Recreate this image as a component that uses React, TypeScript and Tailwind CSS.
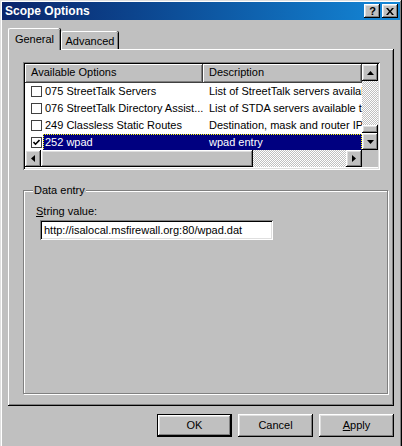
import React from "react";

const raised =
  "shadow-[inset_-1px_-1px_#000,inset_1px_1px_#fff,inset_-2px_-2px_#808080,inset_2px_2px_#dfdfdf]";
const headerBtn =
  "shadow-[inset_-1px_-1px_#404040,inset_1px_1px_#fff,inset_-2px_-2px_#808080]";
const sunken =
  "shadow-[inset_1px_1px_#808080,inset_-1px_-1px_#fff,inset_2px_2px_#000,inset_-2px_-2px_#dfdfdf]";

function Arrow({ dir }: { dir: "up" | "down" | "left" | "right" }) {
  if (dir === "up")
    return (
      <svg width="7" height="4" viewBox="0 0 7 4">
        <polygon points="3.5,0 7,4 0,4" fill="#000" />
      </svg>
    );
  if (dir === "down")
    return (
      <svg width="7" height="4" viewBox="0 0 7 4">
        <polygon points="0,0 7,0 3.5,4" fill="#000" />
      </svg>
    );
  if (dir === "left")
    return (
      <svg width="4" height="7" viewBox="0 0 4 7">
        <polygon points="4,0 4,7 0,3.5" fill="#000" />
      </svg>
    );
  return (
    <svg width="4" height="7" viewBox="0 0 4 7">
      <polygon points="0,0 4,3.5 0,7" fill="#000" />
    </svg>
  );
}

const rows = [
  { name: "075 StreetTalk Servers", desc: "List of StreetTalk servers available", checked: false, sel: false },
  { name: "076 StreetTalk Directory Assist...", desc: "List of STDA servers available to the client", checked: false, sel: false },
  { name: "249 Classless Static Routes", desc: "Destination, mask and router IP addresses", checked: false, sel: false },
  { name: "252 wpad", desc: "wpad entry", checked: true, sel: true },
];

export default function App() {
  return (
    <div className="w-[402px] h-[446px] overflow-hidden bg-[#c0c0c0] font-['Liberation_Sans',Arial,sans-serif] text-[11px] text-black">
      <div className="w-[402px] h-[452px] p-[2px] flex flex-col bg-[#c0c0c0] shadow-[inset_-1px_-1px_#000,inset_1px_1px_#dfdfdf,inset_-2px_-2px_#808080,inset_2px_2px_#fff]">
        {/* Title bar */}
        <div className="h-[18px] flex items-center pl-[3px] pr-[2px] bg-linear-to-r from-[#0a246a] to-[#1488d8]">
          <span className="flex-1 text-white font-bold text-[12px] leading-[18px]">Scope Options</span>
          <div className="flex gap-[2px]">
            <div className={`w-[16px] h-[14px] bg-[#c0c0c0] flex items-center justify-center ${raised}`}>
              <span className="font-bold text-[11px] leading-[11px] pl-[1px]">?</span>
            </div>
            <div className={`w-[16px] h-[14px] bg-[#c0c0c0] flex items-center justify-center ${raised}`}>
              <svg width="8" height="7" viewBox="0 0 8 7">
                <path d="M0 0h2l2 2.4 2-2.4h2l-3 3.5 3 3.5h-2l-2-2.4-2 2.4h-2l3-3.5z" fill="#000" />
              </svg>
            </div>
          </div>
        </div>

        {/* Tabs */}
        <div className="mt-[8px] ml-[6px] h-[21px] flex items-end">
          <div className="relative z-10 w-[52px] h-[22px] -mb-[1px] bg-[#c0c0c0] rounded-t-[2px] border-l border-t border-white shadow-[inset_-1px_0_#808080,1px_0_#000] flex justify-center pt-[3px] leading-[14px]">
            General
          </div>
          <div className="ml-[1px] w-[57px] h-[18px] bg-[#c0c0c0] rounded-t-[2px] border-l border-t border-white shadow-[inset_-1px_0_#808080,1px_0_#000] flex justify-center pt-[2px] leading-[14px]">
            Advanced
          </div>
        </div>

        {/* Panel */}
        <div className="ml-[6px] w-[386px] h-[357px] bg-[#c0c0c0] pl-[15px] pt-[13px] shadow-[inset_-1px_-1px_#000,inset_1px_1px_#fff,inset_-2px_-2px_#808080]">
          {/* List view */}
          <div className={`w-[357px] h-[108px] p-[2px] bg-white ${sunken} flex flex-col`}>
            <div className="flex h-[86px]">
              <div className="w-[337px] flex flex-col overflow-hidden">
                <div className="flex h-[19px] shrink-0 bg-[#c0c0c0]">
                  <div className={`w-[178px] shrink-0 pl-[6px] leading-[17px] ${headerBtn}`}>Available Options</div>
                  <div className={`flex-1 pl-[6px] leading-[17px] ${headerBtn}`}>Description</div>
                </div>
                {rows.map((r) => (
                  <div key={r.name} className="flex h-[17px] shrink-0 whitespace-nowrap">
                    <div className="w-[18px] shrink-0 pl-[6px] flex items-center">
                      <div className="w-[11px] h-[11px] border border-[#404040] bg-white flex items-center justify-center">
                        {r.checked && (
                          <svg width="7" height="7" viewBox="0 0 7 7">
                            <polyline points="0.5,3 2.5,5.2 6.5,1" fill="none" stroke="#000" strokeWidth="1.6" />
                          </svg>
                        )}
                      </div>
                    </div>
                    <div
                      className={`flex-1 flex min-w-0 ${
                        r.sel
                          ? "bg-[#000080] text-white outline-1 outline-dotted outline-[#ffff00] -outline-offset-1"
                          : ""
                      }`}
                    >
                      <div className="w-[160px] shrink-0 pl-[2px] leading-[17px] overflow-hidden">{r.name}</div>
                      <div className="flex-1 pl-[6px] leading-[17px] overflow-hidden">{r.desc}</div>
                    </div>
                  </div>
                ))}
              </div>
              {/* vertical scrollbar */}
              <div className="w-[16px] flex flex-col">
                <div className={`h-[17px] bg-[#c0c0c0] flex items-center justify-center ${raised}`}>
                  <Arrow dir="up" />
                </div>
                <div className="flex-1 bg-[image:repeating-conic-gradient(#fff_0_25%,#c0c0c0_0_50%)] bg-[length:2px_2px]" />
                <div className={`h-[8px] bg-[#c0c0c0] ${raised}`} />
                <div className={`h-[17px] bg-[#c0c0c0] flex items-center justify-center ${raised}`}>
                  <Arrow dir="down" />
                </div>
              </div>
            </div>
            {/* horizontal scrollbar */}
            <div className="flex h-[17px]">
              <div className={`w-[16px] bg-[#c0c0c0] flex items-center justify-center ${raised}`}>
                <Arrow dir="left" />
              </div>
              <div className={`w-[212px] bg-[#c0c0c0] ${raised}`} />
              <div className="w-[93px] bg-[image:repeating-conic-gradient(#fff_0_25%,#c0c0c0_0_50%)] bg-[length:2px_2px]" />
              <div className={`w-[16px] bg-[#c0c0c0] flex items-center justify-center ${raised}`}>
                <Arrow dir="right" />
              </div>
              <div className="flex-1 bg-[#c0c0c0]" />
            </div>
          </div>

          {/* Group box */}
          <div className="mt-[20px] w-[365px] h-[204px] border border-[#808080] shadow-[inset_1px_1px_#fff,1px_1px_#fff] flex flex-col">
            <div className="-mt-[7px] ml-[9px] px-[1px] w-fit bg-[#c0c0c0] leading-[13px]">Data entry</div>
            <div className="mt-[8px] pl-[12px] leading-[13px]">
              <span className="underline underline-offset-[1px]">S</span>tring value:
            </div>
            <div className={`mt-[2px] ml-[16px] w-[233px] h-[20px] bg-white ${sunken} flex items-center pl-[4px] leading-[14px]`}>
              http://isalocal.msfirewall.org:80/wpad.dat
            </div>
          </div>
        </div>

        {/* Buttons */}
        <div className="mt-[8px] ml-[6px] w-[386px] flex justify-end gap-[6px]">
          <div className="w-[75px] h-[23px] bg-[#c0c0c0] flex items-center justify-center shadow-[inset_-1px_-1px_#000,inset_1px_1px_#000,inset_-2px_-2px_#000,inset_2px_2px_#fff,inset_-3px_-3px_#808080,inset_3px_3px_#dfdfdf]">
            OK
          </div>
          <div className={`w-[75px] h-[23px] bg-[#c0c0c0] flex items-center justify-center ${raised}`}>Cancel</div>
          <div className={`w-[75px] h-[23px] bg-[#c0c0c0] flex items-center justify-center ${raised}`}>
            <span>
              <span className="underline underline-offset-[1px]">A</span>pply
            </span>
          </div>
        </div>
      </div>
    </div>
  );
}
